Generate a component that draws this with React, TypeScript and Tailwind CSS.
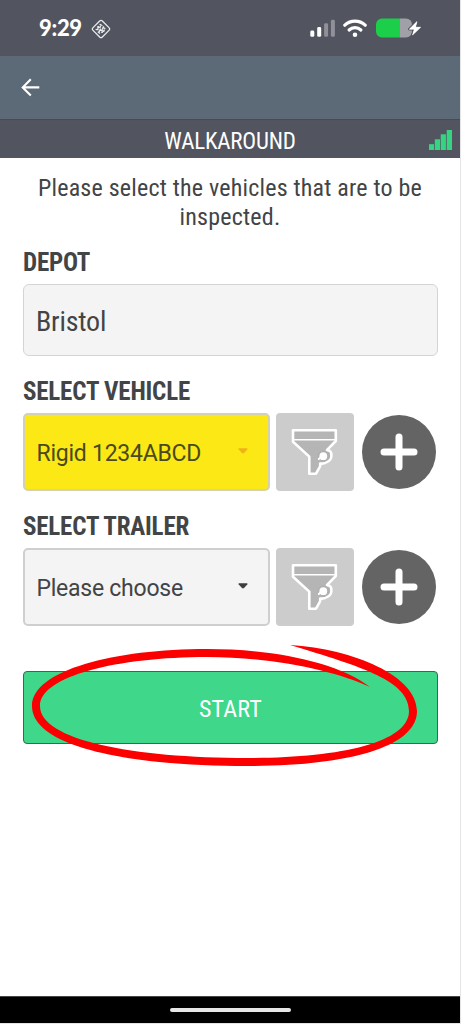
import type { ReactNode } from "react";

const StatusBar = () => (
  <div className="flex h-14 items-center justify-between bg-[#52545f] pl-[39px] pr-[38px]">
    <div className="flex items-center gap-[9px]">
      <span className="w-[43px] font-['Lato'] text-[22px] leading-none font-black tracking-[-0.3px] text-white">9:29</span>
      <svg width="20" height="20" viewBox="0 0 20 20" fill="none" stroke="#e8eaec" className="mt-0.5">
        <path d="M8.9 1.8 1.8 8.9a1.5 1.5 0 0 0 0 2.2l7.1 7.1a1.5 1.5 0 0 0 2.2 0l7.1-7.1a1.5 1.5 0 0 0 0-2.2l-7.1-7.1a1.5 1.5 0 0 0-2.2 0Z" strokeWidth="1.3" />
        <path d="M8.5 5.3l3 1.2M6 7.8l2.8.6M11.5 8l2.9 1.8M4.6 10.4l3 .4M9.2 10.6l3 1.5M6.8 12.8l2.2 1.7M12 13.4l-2-.3M10 5l-.8 3.6M7.6 7l-1 3.6M12.8 7.4l-1.6 3.2M9.5 9.5l-1.3 3.4M13.5 10.5l-1 2.6" strokeWidth="1.3" />
      </svg>
    </div>
    <div className="flex items-center">
      <svg width="26" height="18" viewBox="0 0 26 18" fill="#fff">
        <rect x="0.3" y="11.5" width="4" height="6.3" rx="1.4" />
        <rect x="7.2" y="8" width="4" height="9.8" rx="1.4" />
        <rect x="14.1" y="4.3" width="4" height="13.5" rx="1.4" fill="#8f9098" />
        <rect x="20.9" y="0.8" width="4" height="17" rx="1.4" fill="#8f9098" />
      </svg>
      <svg width="24" height="19" viewBox="0 0 24 19" fill="none" stroke="#fff" strokeWidth="3.2" className="ml-[7px]">
        <path d="M1.8 6.2a15 15 0 0 1 20.4 0" strokeLinecap="round" />
        <path d="M6.1 11a8.7 8.7 0 0 1 11.8 0" strokeLinecap="round" />
        <circle cx="12" cy="15.8" r="2.3" fill="#fff" stroke="none" />
      </svg>
      <svg width="46" height="20" viewBox="0 0 46 20" className="ml-[9px]">
        <path d="M24 .5h6a6 6 0 0 1 6 6v7a6 6 0 0 1-6 6h-6Z" fill="#a0a1a8" />
        <path d="M24 .5H6a6 6 0 0 0-6 6v7a6 6 0 0 0 6 6h18Z" fill="#1bcf4a" />
        <path d="M41 3.5 33.3 11.2h5L36.5 17l8.2-7.8h-5.2Z" fill="#fff" stroke="#52545f" strokeWidth="2.6" strokeLinejoin="round" paintOrder="stroke" />
        <path d="M41 3.5 33.3 11.2h5L36.5 17l8.2-7.8h-5.2Z" fill="#fff" stroke="#fff" strokeWidth=".5" strokeLinejoin="round" />
      </svg>
    </div>
  </div>
);

const FilterButton = () => (
  <button className="h-[78px] w-[78px] shrink-0 rounded-[4px] bg-[#cccccc]">
    <svg width="78" height="78" viewBox="0 0 78 78" fill="none" stroke="#fff" strokeWidth="2.6" strokeLinejoin="round">
      <path d="M17 17.3h42.8V28l-8.9 9.1c2.8.2 4.6 1.8 4.4 4.3.6 3.6-1.2 6.6-4.4 7.5-1.8 1.8-4.2 2-6.7 1.6.2 1.8 0 3.2-.8 4.2L40 60.7h-6.7V43.6L17 28.8Z" fill="#b5b5b5" />
      <path d="M17.5 26.7h42" strokeWidth="1.6" />
      <circle cx="47.3" cy="43.2" r="4.9" fill="#fff" stroke="#b0b0b0" strokeWidth="2" />
      <path d="M42.8 46 46 43.4" strokeWidth="2" strokeLinecap="round" />
    </svg>
  </button>
);

const AddButton = () => (
  <button className="ml-2 flex h-[74px] w-[74px] shrink-0 items-center justify-center rounded-full bg-[#646464]">
    <svg width="38" height="38" viewBox="0 0 38 38" stroke="#fff" strokeWidth="7" strokeLinecap="round">
      <path d="M19 4v30M4 19h30" />
    </svg>
  </button>
);

const Label = ({ children }: { children: ReactNode }) => (
  <h2 className="text-[25px] leading-[30px] font-bold font-stretch-condensed tracking-[-0.2px] text-[#424446]">{children}</h2>
);

type PickerProps = { value: string; selected?: boolean };

const Picker = ({ value, selected }: PickerProps) => (
  <div className="flex items-center">
    <div
      className={`mr-1.5 flex h-[78px] w-[247px] items-center justify-between rounded-[5px] border-2 pl-[11.5px] pr-[20px] ${
        selected ? "border-[#d3d0b4] bg-[#fce814] text-[#4a4a20]" : "border-[#cfcfcf] bg-[#f4f4f4] text-[#424446]"
      }`}
    >
      <span className="pt-[4px] text-[23px] leading-7 tracking-[-0.25px]">{value}</span>
      <svg width="10" height="6" viewBox="0 0 10 6" className="mb-[3px]">
        <path d="M1 .3h8q1 .2.3 1.2L6 5q-1 .9-2 0L.7 1.5Q0 .5 1 .3Z" fill={selected ? "#efb31a" : "#3c3e40"} />
      </svg>
    </div>
    <FilterButton />
    <AddButton />
  </div>
);

const App = () => (
  <div className="h-[1024px] w-[461px] bg-[#e4e4e6]">
    <div className="flex h-[1023px] w-[460px] flex-col overflow-hidden bg-white font-['Roboto',sans-serif] text-[#424446]">
      <StatusBar />
      <header className="flex h-[63px] items-center bg-[#5c6977] pl-[21px]">
        <svg width="20" height="20" viewBox="0 0 20 20" fill="none" stroke="#fff" strokeWidth="2.1">
          <path d="M18.3 9.4H2M9.8 1.2 1.7 9.4l8.1 8.2" />
        </svg>
      </header>
      <div className="flex h-[39px] items-center border-t border-[#474a54] bg-[#52545f] pr-[8px]">
        <h1 className="flex-1 pt-[5px] pl-[31px] text-center text-[23px] leading-7 font-stretch-condensed tracking-[-0.2px] text-white">
          WALKAROUND
        </h1>
        <svg width="23" height="20" viewBox="0 0 23 20" fill="#35d483" className="mt-[2px]">
          <rect x="0" y="14.2" width="5" height="5.8" />
          <rect x="5.8" y="9.3" width="5.2" height="10.7" />
          <rect x="11.7" y="4.3" width="5.2" height="15.7" />
          <rect x="17.7" y="0" width="5.3" height="20" />
        </svg>
      </div>

      <main className="flex flex-1 flex-col px-[23px] pt-4">
        <p className="-mx-1 text-center text-[24px] leading-[29px] font-stretch-condensed tracking-[0.2px]">
          Please select the vehicles that are to be inspected.
        </p>

        <section className="mt-4">
          <Label>DEPOT</Label>
          <div className="mt-[6px] flex h-[72px] w-[415px] items-center rounded-[6px] border border-[#d4d4d4] bg-[#f4f4f4] pl-[12px] pt-[4px] text-[28px] font-stretch-condensed tracking-[-0.2px]">
            Bristol
          </div>
        </section>

        <section className="mt-[21px]">
          <Label>SELECT VEHICLE</Label>
          <div className="mt-[6px]">
            <Picker value="Rigid 1234ABCD" selected />
          </div>
        </section>

        <section className="mt-[21px]">
          <Label>SELECT TRAILER</Label>
          <div className="mt-[6px]">
            <Picker value="Please choose" />
          </div>
        </section>

        <div className="relative mt-[45px] w-[415px]">
          <button className="h-[73px] w-full rounded-[4px] border border-[#48605a] bg-[#3fd789] pt-[2px] text-[24px] font-stretch-condensed tracking-[0.2px] text-white">
            START
          </button>
          {/* hand-drawn ring around the button */}
          <svg className="absolute -top-[31px] -left-[3px]" width="420" height="140" viewBox="20 640 420 140" fill="#fb0000">
            <path d="M290 645C354 649 417 676 417 711C417 748 345 766 248 766C125 766 32 746 32 706C32 670 115 649 207 649C270 649 336 661 370 687C336 671 273 657 207 657C118 657 40 676 40 706C40 740 132 758 248 758C338 758 409 743 409 711C409 681 363 667 290 645Z" />
          </svg>
        </div>
      </main>

      <footer className="flex h-[27px] justify-center border-t border-[#444] bg-black pt-[11px]">
        <div className="h-1 w-[121px] rounded-full bg-[#e6e6e6]" />
      </footer>
    </div>
  </div>
);

export default App;
